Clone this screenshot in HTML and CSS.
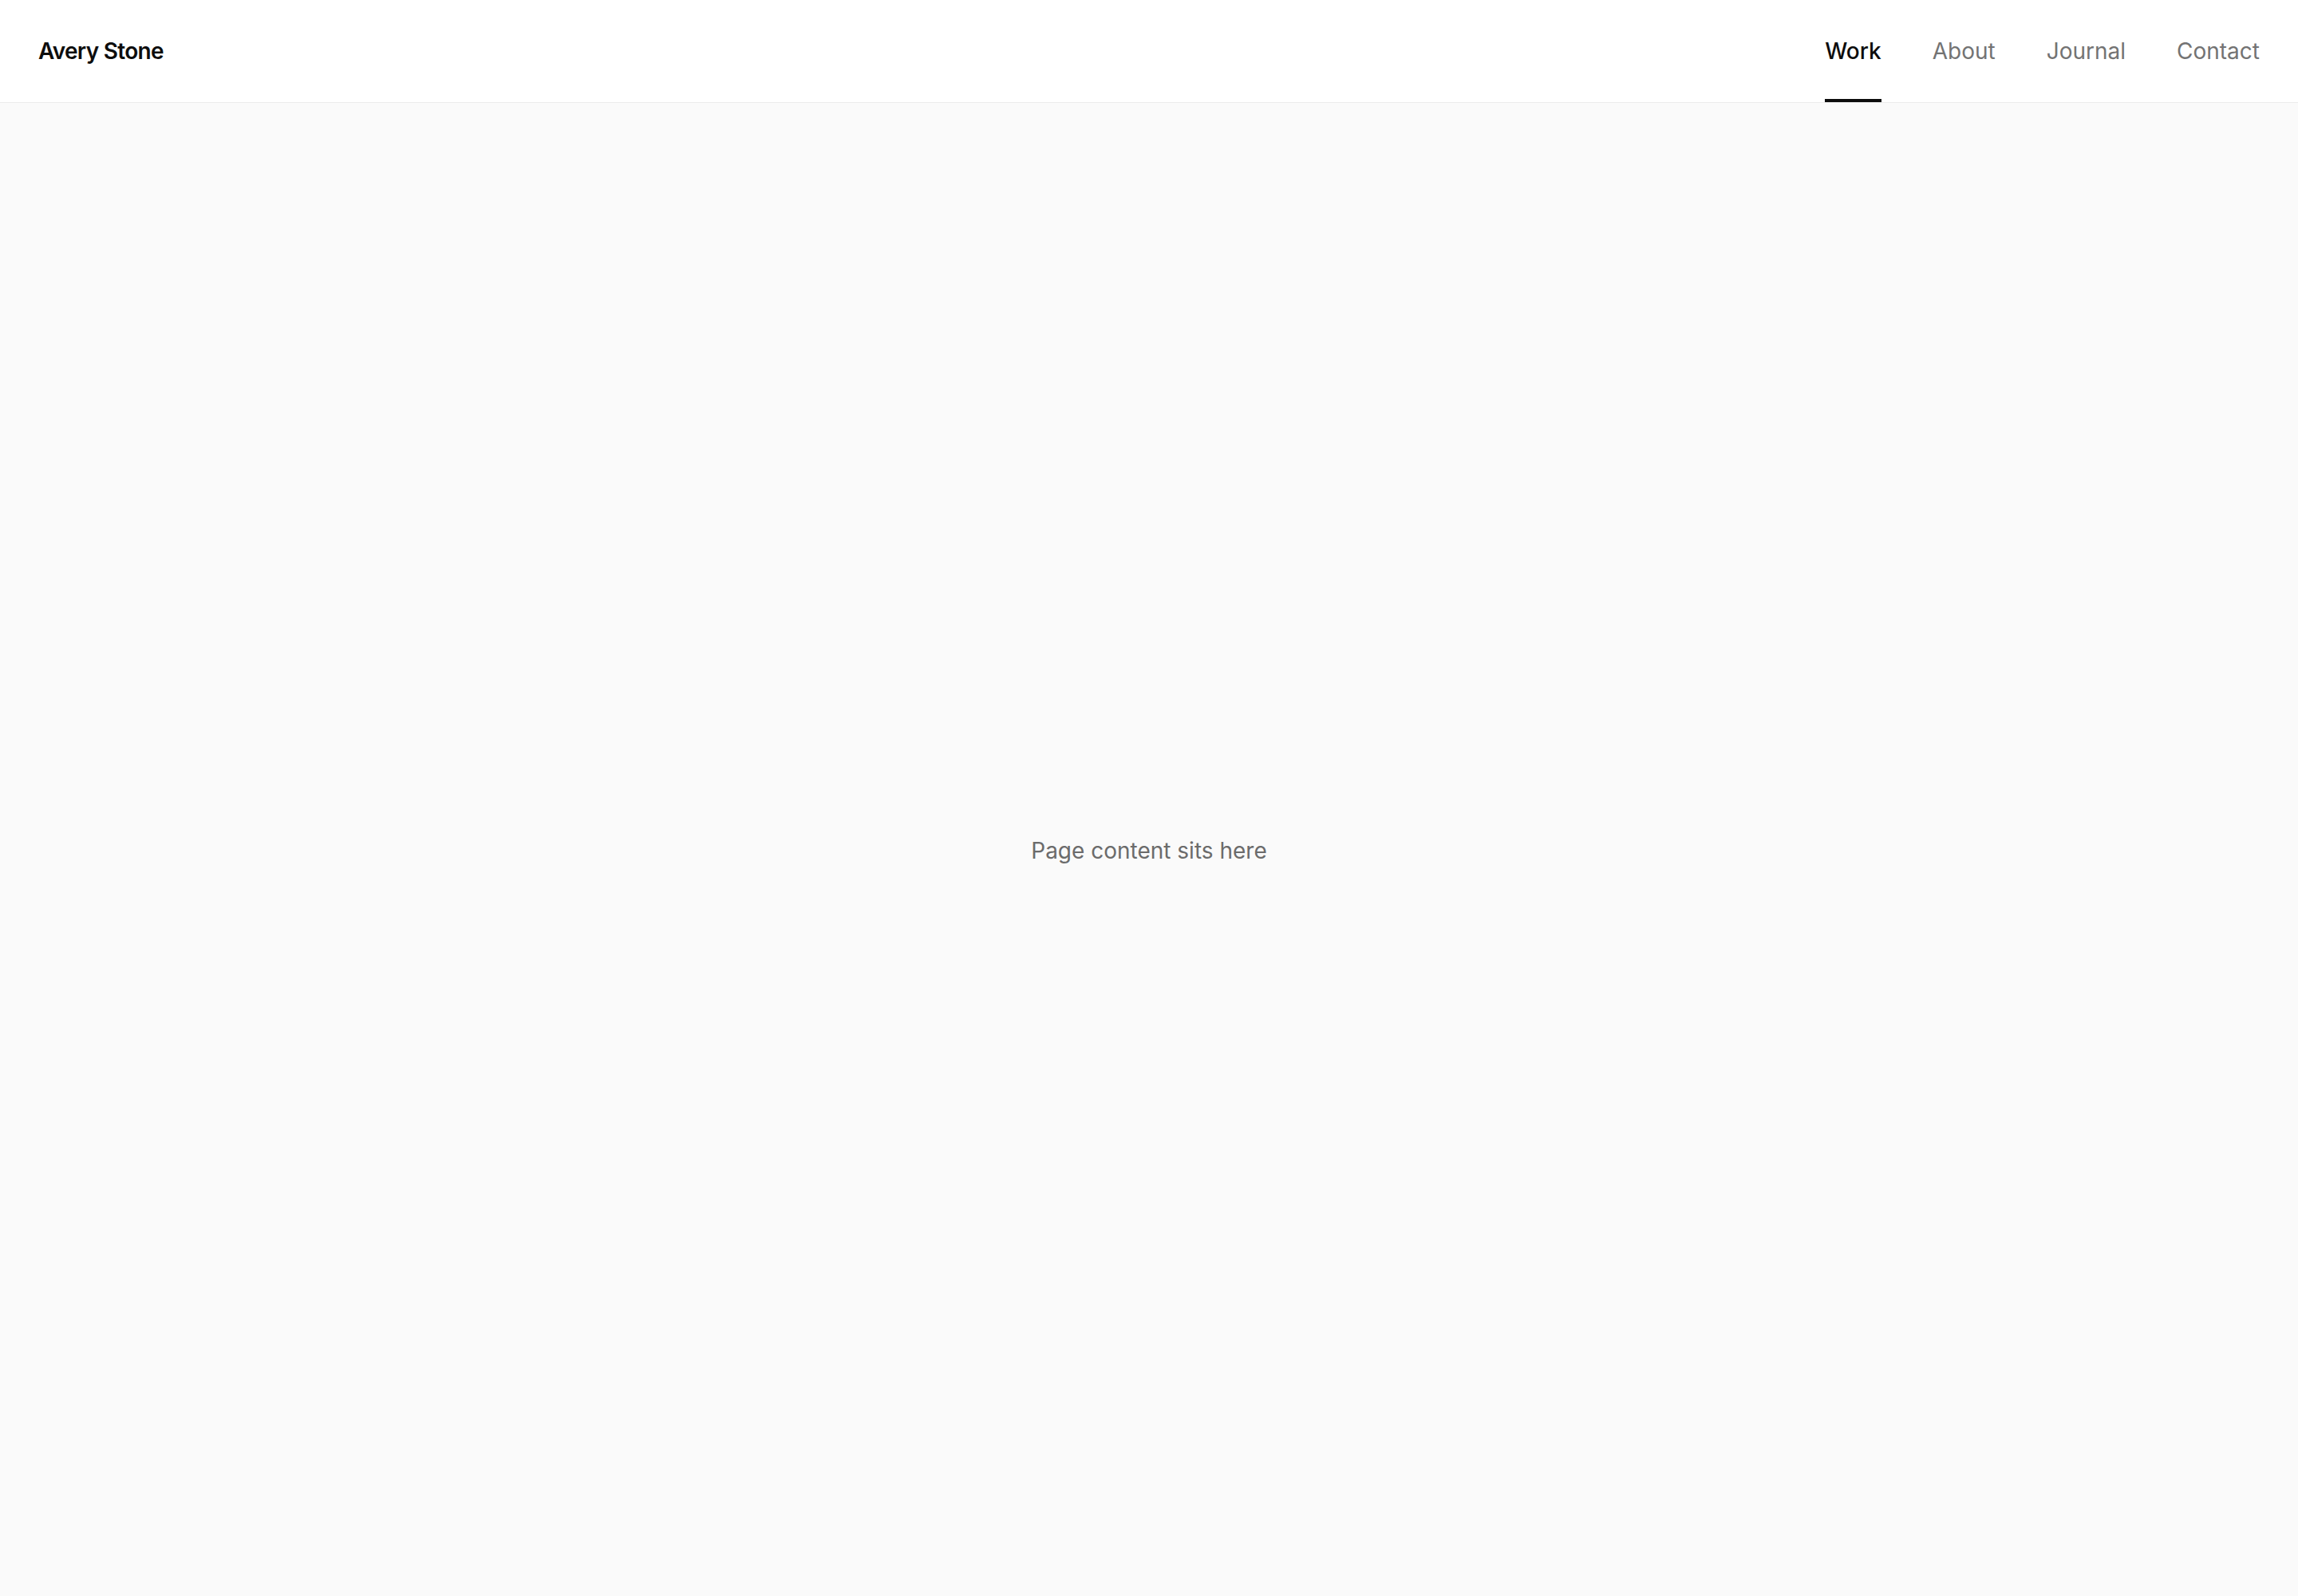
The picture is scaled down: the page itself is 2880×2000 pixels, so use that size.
FILE: index.html
```html
<!DOCTYPE html>
<html lang="en">
<head>
<meta charset="utf-8">
<title>Avery Stone</title>
<link rel="stylesheet" href="styles.css">
</head>
<body>
<header class="site-header">
  <a class="brand" href="#">Avery Stone</a>
  <nav class="nav">
    <a class="nav-link active" href="#">Work</a>
    <a class="nav-link" href="#">About</a>
    <a class="nav-link" href="#">Journal</a>
    <a class="nav-link" href="#">Contact</a>
  </nav>
</header>
<main class="content">
  <p class="placeholder">Page content sits here</p>
</main>
</body>
</html>
```

FILE: styles.css
```css
* { box-sizing: border-box; }
html, body { margin: 0; padding: 0; height: 100%; }
body {
  font-family: Inter, "Noto Sans", sans-serif;
  background: #fafafa;
  color: #111;
  display: flex;
  flex-direction: column;
  min-height: 100vh;
}
.site-header {
  height: 129px;
  background: #ffffff;
  border-bottom: 1px solid #ebebeb;
  display: flex;
  align-items: stretch;
  justify-content: space-between;
  padding: 0 48px;
}
.brand {
  display: flex;
  align-items: center;
  font-size: 28px;
  font-weight: 600;
  color: #0d0d0d;
  text-decoration: none;
  letter-spacing: -0.025em;
}
.nav {
  display: flex;
  align-items: stretch;
  gap: 64px;
}
.nav-link {
  display: flex;
  align-items: center;
  font-size: 28px;
  font-weight: 400;
  color: #737373;
  text-decoration: none;
  border-top: 4px solid transparent;
  border-bottom: 4px solid transparent;
}
.nav-link.active {
  color: #0d0d0d;
  font-weight: 500;
  border-bottom-color: #0d0d0d;
}
.content {
  flex: 1;
  display: flex;
  align-items: center;
  justify-content: center;
  padding-top: 2px;
}
.placeholder {
  margin: 0;
  font-size: 28px;
  color: #6b6b6b;
}
```
